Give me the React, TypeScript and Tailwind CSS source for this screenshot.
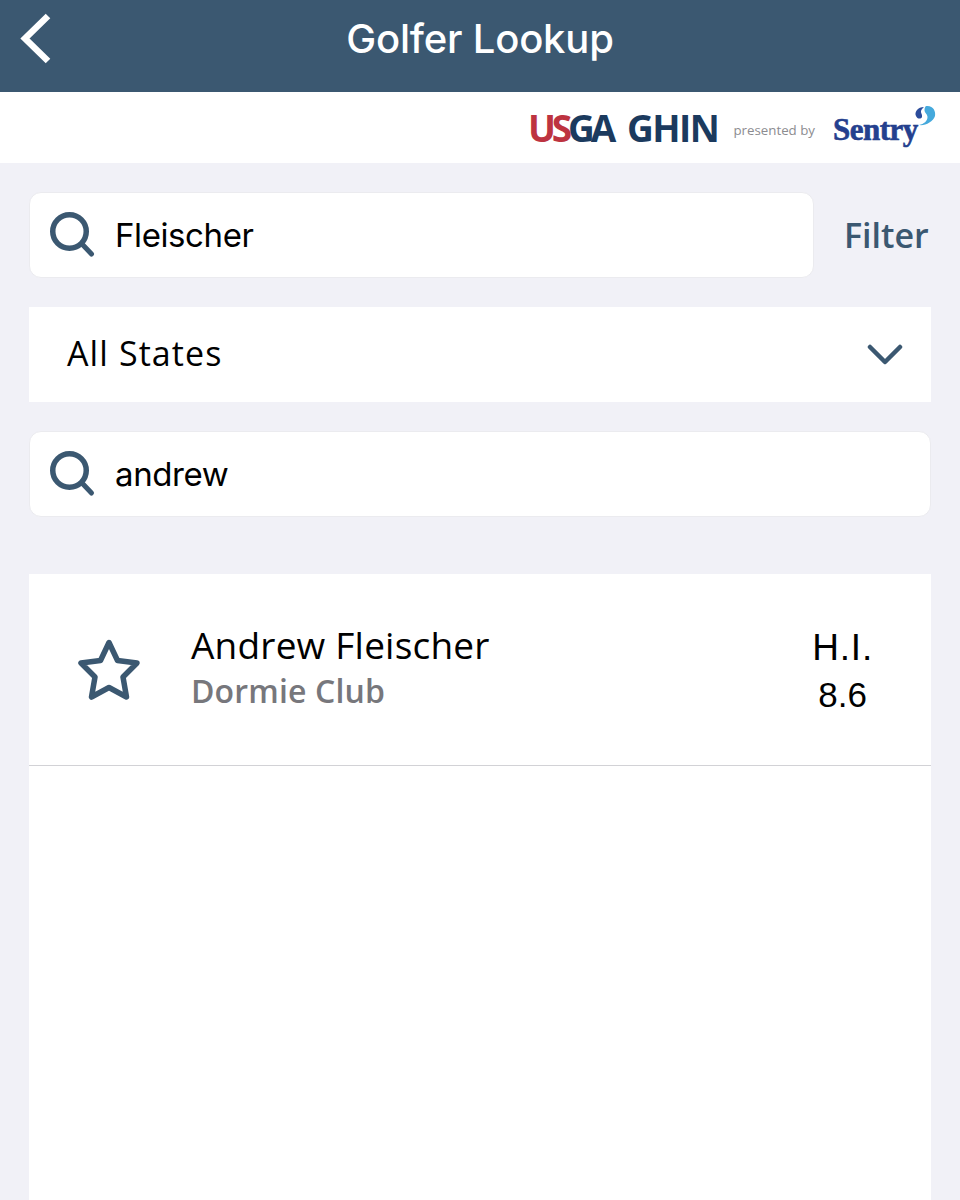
const NAVY = '#3b5871';

function SearchIcon() {
  return (
    <svg width="46" height="46" viewBox="0 0 46 46" fill="none" stroke="#3b5871" className="shrink-0">
      <circle cx="19.5" cy="19.5" r="16.75" strokeWidth="5.5" />
      <path d="M32 32 L41.5 42" strokeWidth="5" strokeLinecap="round" />
    </svg>
  );
}

function SearchBox({ value, className }: { value: string; className: string }) {
  return (
    <div
      className={`flex h-[86px] items-center rounded-[12px] border border-[#ebebef] bg-white pl-[20px] ${className}`}
    >
      <SearchIcon />
      <span className="ml-[19px] font-['Inter',sans-serif] text-[33px] leading-none tracking-[-0.4px] text-black">
        {value}
      </span>
    </div>
  );
}

function Logo() {
  return (
    <div className="flex items-center">
      <span className="font-['Open_Sans',sans-serif] text-[37px] leading-none font-bold tracking-[-4.2px]">
        <span className="text-[#bd3340]">US</span>
        <span className="text-[#1b3a5e]">GA</span>
      </span>
      <span className="ml-[15px] font-['Open_Sans',sans-serif] text-[37px] leading-none font-bold tracking-[-1.5px] text-[#1b3a5e]">
        GHIN
      </span>
      <span className="mt-[7px] ml-[15px] font-['Open_Sans',sans-serif] text-[13.3px] leading-none text-[#8c8c90]">
        presented by
      </span>
      <div className="relative ml-[18px] flex h-[40px] w-[102px] items-end">
        <span className="mb-[3px] font-['Liberation_Serif',serif] text-[31px] leading-none font-bold tracking-[-0.5px] text-[#24408e] [-webkit-text-stroke:0.6px_#24408e]">
          Sentry
        </span>
        <svg width="24" height="24" viewBox="0 0 24 24" fill="none" className="absolute top-[-3px] right-[-1px]">
          <path d="M12 2 C6 2 2 7 4 11 C5 14 9 14.5 10 12 C10.5 9 8.5 8 9 6 C9.5 4 11 3 12 2 Z" fill="#2b4c9b" />
          <path d="M14 1 C21 0 24 6 23 11 C21 17 13 21 7 20 C12 19 15.5 16 15.5 12 C15.5 9 12.5 8 12.5 5 C12.5 3 13 2 14 1 Z" fill="#45a9dc" />
        </svg>
      </div>
    </div>
  );
}

export default function App() {
  return (
    <div className="flex h-[1200px] flex-col overflow-hidden bg-[#f1f1f7]">
      {/* Header */}
      <header className="relative flex h-[92px] shrink-0 items-center justify-center bg-[#3b5871] pb-[15px]">
        <svg width="34" height="52" viewBox="0 0 34 52" fill="none" className="absolute top-[13px] left-[19px]">
          <path d="M29 3 L6 25.5 L29 48" stroke="white" strokeWidth="6.5" />
        </svg>
        <h1 className="font-['Inter',sans-serif] text-[40px] leading-none font-medium tracking-[-0.2px] text-white">
          Golfer Lookup
        </h1>
      </header>

      {/* Sponsor bar */}
      <div className="flex h-[71px] shrink-0 items-center justify-end bg-white pr-[25px]">
        <Logo />
      </div>

      <main className="flex flex-1 flex-col px-[29px] pt-[29px]">
        <div className="flex items-center">
          <SearchBox value="Fleischer" className="w-[785px]" />
          <span
            className="ml-[30px] font-['Open_Sans',sans-serif] text-[34px] leading-none font-semibold"
            style={{ color: NAVY }}
          >
            Filter
          </span>
        </div>

        <div className="mt-[29px] flex h-[95px] items-center justify-between bg-white pr-[28px] pl-[38px]">
          <span className="mb-[4px] font-['Open_Sans',sans-serif] text-[34px] leading-none tracking-[1.1px] text-black">
            All States
          </span>
          <svg width="36" height="22" viewBox="0 0 36 22" fill="none">
            <path d="M3 3 L18 18 L33 3" stroke="#3b5871" strokeWidth="4.5" strokeLinecap="round" strokeLinejoin="round" />
          </svg>
        </div>

        <SearchBox value="andrew" className="mt-[29px]" />

        {/* Results */}
        <section className="mt-[57px] flex-1 bg-white">
          <div className="flex h-[192px] items-center border-b border-[#d2d2d6] pr-[58px] pl-[48px]">
            <svg width="64" height="62" viewBox="0 0 64 62" fill="none" className="shrink-0">
              <path
                d="M32 3.5 L40.5 21.5 L60 24 L46 38 L49.5 58 L32 48.5 L14.5 58 L18 38 L4 24 L23.5 21.5 Z"
                stroke="#3b5871"
                strokeWidth="5.5"
                strokeLinejoin="round"
              />
            </svg>
            <div className="mb-[4px] ml-[50px] flex-1">
              <div className="font-['Open_Sans',sans-serif] text-[37px] leading-[46px] tracking-[0.2px] text-black">
                Andrew Fleischer
              </div>
              <div className="font-['Open_Sans',sans-serif] text-[32px] leading-[46px] font-semibold tracking-[0.15px] text-[#77777c]">
                Dormie Club
              </div>
            </div>
            <div className="pt-[3px] text-center font-['Liberation_Sans',sans-serif] leading-[47px] text-black">
              <div className="text-[37px] tracking-[0.8px]">H.I.</div>
              <div className="text-[35px]">8.6</div>
            </div>
          </div>
        </section>
      </main>
    </div>
  );
}
